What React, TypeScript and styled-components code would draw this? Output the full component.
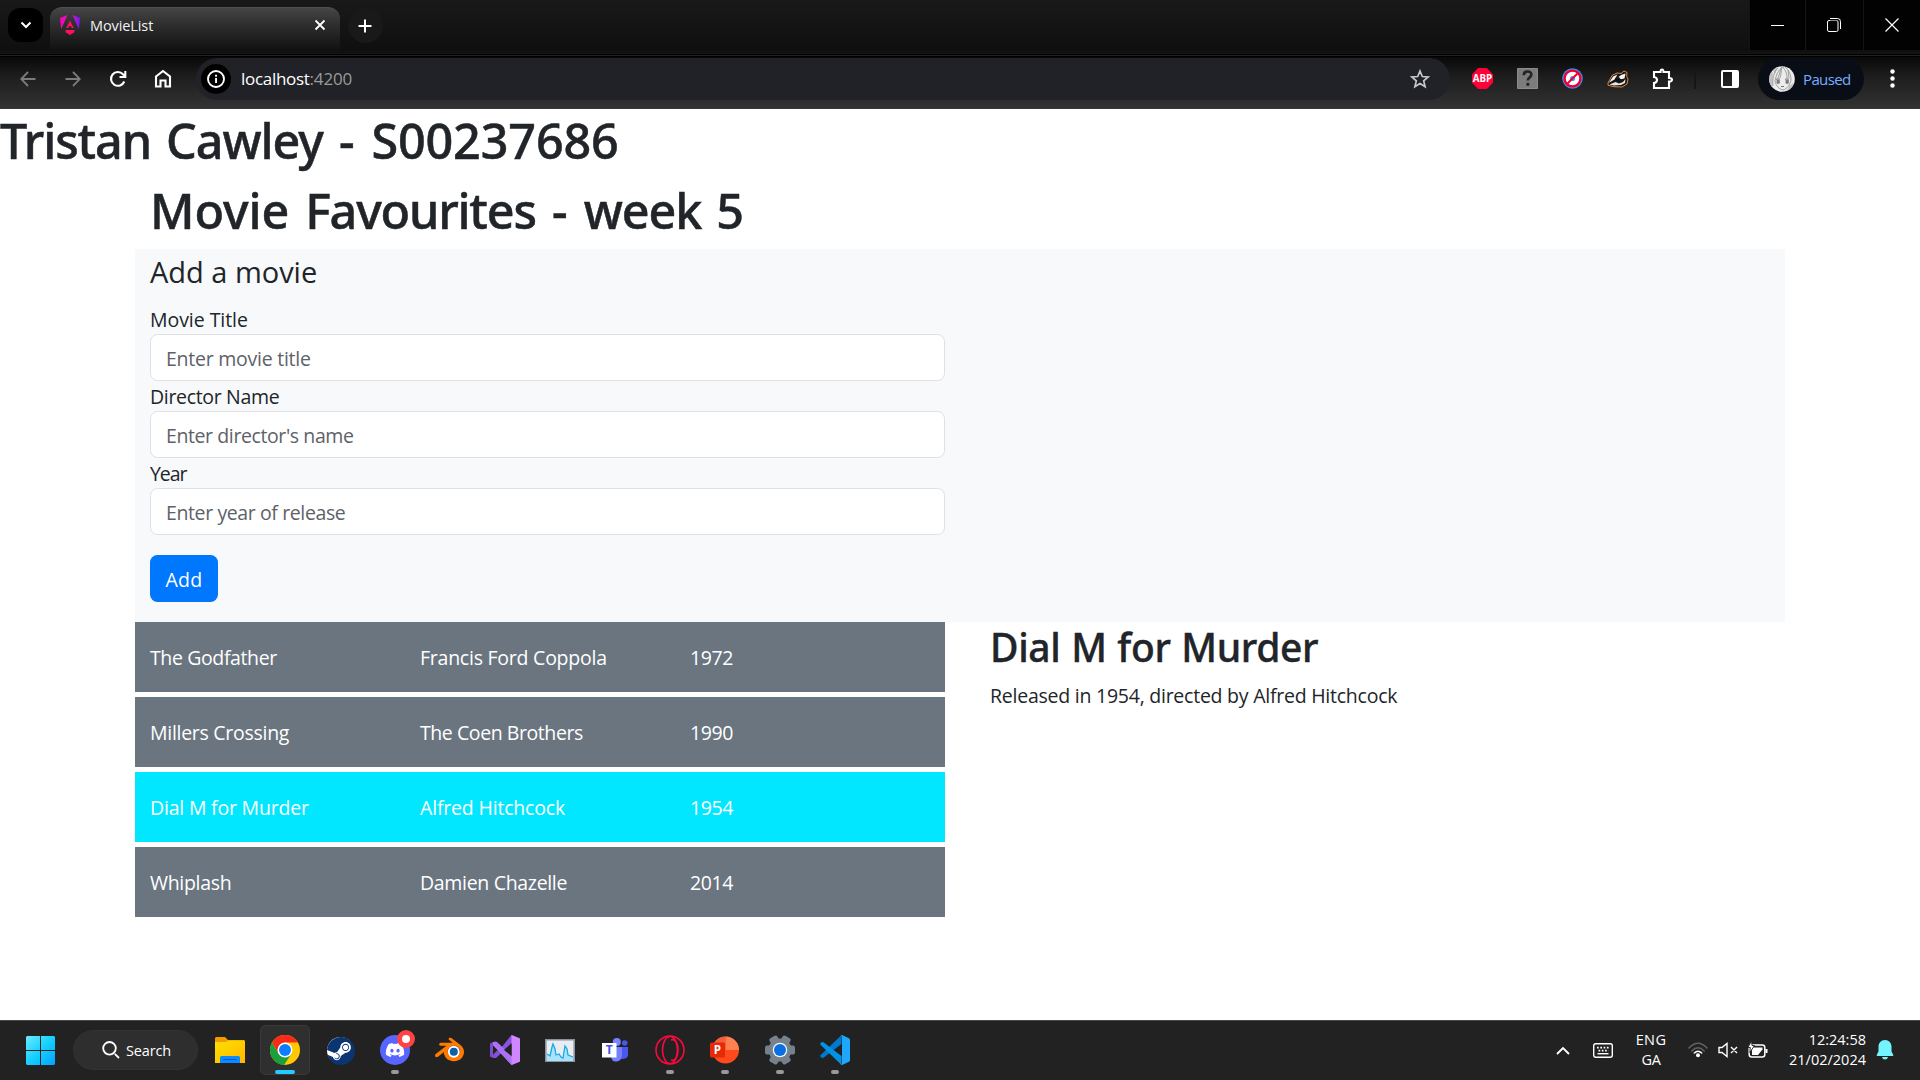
import React from 'react';
import styled, { createGlobalStyle } from 'styled-components';
import { FaDiscord } from 'react-icons/fa';
import { SiSteam, SiBlender } from 'react-icons/si';

const GlobalStyle = createGlobalStyle`
  * { box-sizing: border-box; }
  html, body { margin: 0; padding: 0; background: #fff; }
  body { font-family: "Open Sans", "Noto Sans", sans-serif; overflow: hidden; }
  svg { display: block; flex: none; }
`;

/* ---------- shared ---------- */

const Screen = styled.div`
  display: flex;
  flex-direction: column;
  width: 1920px;
  height: 1080px;
`;

const Txt = styled.span<{ $ls?: number }>`
  letter-spacing: ${p => p.$ls ?? 0}px;
  white-space: pre;
`;

/* ---------- tab strip ---------- */

const TabStrip = styled.div`
  display: flex;
  height: 57px;
  padding-left: 8px;
  background:
    linear-gradient(#000, #000) 0 54px / 100% 1px no-repeat,
    linear-gradient(#222, #222) 0 55px / 100% 1px no-repeat,
    linear-gradient(#000, #000) 0 56px / 100% 1px no-repeat,
    linear-gradient(#191919, #0f0f0f 50px, #141414 54px);
`;

const TabSearch = styled.div`
  display: grid;
  place-items: center;
  width: 35px;
  height: 34px;
  margin-top: 8px;
  border-radius: 12px;
  background: #000;
`;

const Tab = styled.div`
  display: flex;
  align-items: center;
  width: 290px;
  height: 45px;
  margin: 7px 0 0 7px;
  padding: 0 14px 10px 10px;
  border-radius: 12px 12px 0 0;
  background: linear-gradient(#454545, #303030 35%, #111 95%);
  border-top: 1px solid #505050;
  color: #f1f1f1;
  font-size: 14.5px;
`;

const TabTitle = styled.div`
  flex: 1;
  margin-left: 10px;
`;

const NewTab = styled.div`
  display: grid;
  place-items: center;
  width: 35px;
  height: 35px;
  margin: 8px auto 0 8px;
  padding-right: 1px;
  border-radius: 50%;
  background: #191919;
`;

const WindowButton = styled.div<{ $w: number }>`
  display: grid;
  place-items: center;
  width: ${p => p.$w}px;
  height: 50px;
  padding-right: 1px;
  background: #020202;
  border-left: 1px solid #141414;
`;

/* ---------- toolbar ---------- */

const Toolbar = styled.div`
  display: flex;
  align-items: center;
  height: 52px;
  padding: 0 5px 8px 5px;
  background: linear-gradient(#090909, #1e1e1e 40%, #2f2f2f 90%, #333);
  border-bottom: 1px solid #3b3838;
`;

const ToolCell = styled.div<{ $w?: number }>`
  display: grid;
  place-items: center;
  width: ${p => p.$w ?? 45}px;
  height: 44px;
`;

const AddressBar = styled.div`
  display: flex;
  align-items: center;
  width: 1254px;
  height: 42px;
  margin: 0 10px 0 11px;
  padding: 0 20px 0 5px;
  border-radius: 21px;
  background: #212227;
  font-size: 17px;
  color: #fff;
`;

const SiteInfo = styled.div`
  display: grid;
  place-items: center;
  width: 30px;
  height: 30px;
  border-radius: 50%;
  background: #000;
  margin-right: 10px;
`;

const Port = styled(Txt)`
  color: #9a9a9a;
  margin-right: auto;
`;

const ToolDivider = styled.div`
  width: 2px;
  height: 20px;
  margin: 0 12px 0 9px;
  background: #161616;
`;

const Profile = styled.div`
  display: flex;
  align-items: center;
  width: 106px;
  height: 42px;
  margin: 0 6px 0 6px;
  padding-left: 11px;
  gap: 8px;
  border-radius: 21px;
  background: #090d16;
  color: #78adff;
  font-size: 15px;
`;

/* ---------- page ---------- */

const Page = styled.main`
  height: 911px;
  background: #fff;
  color: #212529;
  font-size: 19.5px;
`;

const Title = styled.h1`
  margin: 0 0 10px;
  height: 60px;
  padding-top: 2px;
  font: 500 48.5px/58px "Noto Sans", "Open Sans", sans-serif;
  word-spacing: 3.5px;
  -webkit-text-stroke: 0.5px #212529;
`;

const Container = styled.div`
  width: 1650px;
  margin: 0 auto;
`;

const Inset = styled.div`
  padding-left: 15px;
`;

const FormPanel = styled.form`
  display: flex;
  flex-direction: column;
  align-items: flex-start;
  height: 373px;
  padding: 0 840px 20px 15px;
  background: #f7f9fb;
`;

const Legend = styled.div`
  height: 45px;
  margin-bottom: 10px;
  padding-top: 1px;
  font-size: 29px;
  line-height: 44px;
`;

const Label = styled.label`
  height: 30px;
  padding-top: 1px;
  line-height: 29px;
`;

const Input = styled.input<{ $ls: number }>`
  width: 795px;
  height: 47px;
  padding: 2px 15px 0;
  border: 1px solid #dde1e6;
  border-radius: 7.5px;
  background: #fff;
  font: 19.5px "Open Sans", sans-serif;
  letter-spacing: ${p => p.$ls}px;
  outline: none;
  &::placeholder { color: #5d6268; opacity: 1; }
`;

const AddButton = styled.button`
  width: 68px;
  height: 47px;
  margin-top: 20px;
  padding: 1px 0 0;
  border: 0;
  border-radius: 7.5px;
  background: #0077ff;
  color: #fff;
  font: 19.5px "Open Sans", sans-serif;
`;

const Results = styled.div`
  display: grid;
  grid-template-columns: 810px 1fr;
  column-gap: 45px;
`;

const MovieList = styled.div`
  display: flex;
  flex-direction: column;
  gap: 5px;
`;

const MovieRow = styled.div<{ $selected: boolean }>`
  display: grid;
  grid-template-columns: repeat(3, 270px);
  align-items: center;
  height: 70px;
  padding: 0 0 0 15px;
  background: ${p => (p.$selected ? '#00e7ff' : '#6a7580')};
  color: #fff;
  overflow: hidden;
`;

const DetailTitle = styled.h2`
  height: 48px;
  margin: 0 0 10px;
  padding-top: 1px;
  font: 500 39px/47px "Noto Sans", "Open Sans", sans-serif;
  word-spacing: 1px;
  -webkit-text-stroke: 0.4px #212529;
`;

const DetailText = styled.p`
  margin: 0;
  padding-top: 1px;
  line-height: 29px;
`;

/* ---------- taskbar ---------- */

const Taskbar = styled.footer`
  display: flex;
  align-items: center;
  height: 60px;
  padding-left: 26px;
  padding-bottom: 1px;
  background: #222;
  border-top: 1px solid #444746;
  color: #fff;
  font-size: 14.5px;
`;

const SearchBox = styled.div`
  display: flex;
  align-items: center;
  gap: 6px;
  width: 125px;
  height: 40px;
  margin: 0 7px 0 18px;
  padding-left: 28px;
  border-radius: 20px;
  background: #2e2e2e;
  border: 1px solid #323232;
`;

const Apps = styled.div`
  display: flex;
  gap: 5px;
`;

const AppTile = styled.div<{ $active?: boolean }>`
  position: relative;
  display: grid;
  place-items: center;
  width: 50px;
  height: 50px;
  border-radius: 5px;
  background: ${p => (p.$active ? '#2f2f2f' : 'transparent')};
  border: 1px solid ${p => (p.$active ? '#393939' : 'transparent')};
`;

const Indicator = styled.div<{ $active?: boolean }>`
  position: absolute;
  bottom: 0;
  left: 50%;
  transform: translateX(-50%);
  width: ${p => (p.$active ? 20 : 8)}px;
  height: 4px;
  border-radius: 2px;
  background: ${p => (p.$active ? '#22ccff' : '#999')};
`;

const Disc = styled.div<{ $bg: string; $size: number; $color: string }>`
  display: grid;
  place-items: center;
  width: ${p => p.$size}px;
  height: ${p => p.$size}px;
  border-radius: 50%;
  background: ${p => p.$bg};
  color: ${p => p.$color};
`;

const Badge = styled.div`
  position: absolute;
  left: 26px;
  top: 4px;
  width: 18px;
  height: 18px;
  border-radius: 50%;
  border: 5px solid #ff4343;
  background: #fff;
`;

const Tray = styled.div`
  display: flex;
  align-items: center;
  margin-left: auto;
  padding-right: 16px;
`;

const TrayLines = styled.div<{ $w: number; $align: string }>`
  display: flex;
  flex-direction: column;
  align-items: ${p => p.$align};
  width: ${p => p.$w}px;
  line-height: 20px;
`;

const TrayCell = styled.div<{ $w: number }>`
  display: grid;
  place-items: center;
  width: ${p => p.$w}px;
  height: 40px;
`;

/* ---------- icons ---------- */

type StrokeProps = { w: number; h?: number; d: string; sw?: number; c?: string };
const Stroke = ({ w, h = w, d, sw = 2, c = '#fff' }: StrokeProps) => (
  <svg width={w} height={h} viewBox={`0 0 ${w} ${h}`} fill="none" stroke={c} strokeWidth={sw}>
    <path d={d} />
  </svg>
);

const AngularIcon = () => (
  <svg width="20" height="20" viewBox="0 0 20 20">
    <defs>
      <linearGradient id="ng" gradientUnits="userSpaceOnUse" x1="0" x2="20" y1="8" y2="10">
        <stop offset="0" stopColor="#f0b" /><stop offset=".5" stopColor="#e014c0" /><stop offset="1" stopColor="#7018ff" />
      </linearGradient>
    </defs>
    <path d="M7.500 0 0 3l1.200 11zM12.500 0 20 3l-1.200 11z" fill="url(#ng)" />
    <path d="M10 5.500 6.200 13h2l.7-1.800h2.200l.7 1.800h2zM5.600 15h8.800v2.200L10 20l-4.400-2.800z" fill="#ff0f5c" />
  </svg>
);

const AbpIcon = () => (
  <svg width="21" height="21" viewBox="0 0 21 21">
    <path d="M6.200 0h8.600L21 6.200v8.600L14.800 21H6.200L0 14.800V6.200z" fill="#ff0037" />
    <text x="10.500" y="14.200" textAnchor="middle" fontFamily="Open Sans" fontWeight="700" fontSize="9.800" fill="#fff">ABP</text>
  </svg>
);

const QuestionIcon = () => (
  <svg width="21" height="21" viewBox="0 0 21 21">
    <path d="M.5.5h20v20H.5z" fill="#7c7c7c" stroke="#8b8b8b" />
    <path d="M6.800 7.200c0-5 7.600-4.800 7.600-.6 0 3-3.600 2.600-3.600 6" fill="none" stroke="#242424" strokeWidth="2.600" />
    <path d="M9.400 14.800h2.900v3H9.400z" fill="#242424" />
  </svg>
);

const BlockIcon = () => (
  <svg width="21" height="21" viewBox="0 0 21 21">
    <circle cx="10.500" cy="10.500" r="10.300" fill="#3d8cf0" />
    <circle cx="10.500" cy="10.500" r="7.900" fill="#fff" stroke="#f0002c" strokeWidth="2.300" />
    <circle cx="10.500" cy="10.500" r="2.600" fill="#4d9bf5" />
    <path d="m5.500 15.500 10-10" stroke="#f0002c" strokeWidth="2" />
  </svg>
);

const BadgerIcon = () => (
  <svg width="22" height="18" viewBox="0 0 22 18">
    <path d="M1 13 5 5.500 10 3l4 .5L17 1l3 1.500-.3 4L21 9l-1 5-5 3-8-.3-6-1.500z" fill="#161616" stroke="#e08a3c" strokeWidth="1" strokeLinejoin="round" />
    <path d="M2 12.800 6 6.500l4.500-2-3 5zM9 9l5-4 4.500-1.500-1 5-5 1z" fill="#f3f3f3" />
    <path d="m2.500 14.500 6-2.500 3.500 1.500 4-1.500 2.500-3-.5 4-4 2-7 .6z" fill="#e4e4e4" />
    <path d="m8 9 4-1.500 1.500 2.500-3 1.500zM13 12l4-2" fill="#111" stroke="#111" />
  </svg>
);

const AvatarIcon = () => (
  <svg width="26" height="26" viewBox="0 0 26 26">
    <defs><clipPath id="av"><circle cx="13" cy="13" r="12.800" /></clipPath></defs>
    <g clipPath="url(#av)" fill="none" stroke="#8c8c8c" strokeWidth=".8">
      <path d="M0 0h26v26H0z" fill="#ececec" stroke="none" />
      <path d="M0 6h4l-1 17-3 1zM20 20l6-4v9h-8zM3 3l6-3-3 8z" fill="#c2c2c2" stroke="none" />
      <path d="M13 1C9 5 7 9 6 15M13 1c-1 5-1 8-2 11M14 1c3 4 4 7 4 11M16 1c4 3 6 8 6 13M9 2C5 6 3 12 4 20M12 3 9 12M19 4l1 8M6 15c1 5 4 8 8 9 4-1 7-5 8-10" />
      <path d="M7 13.500c1.500-1 3-1 4 0M16 13.500c1.500-1 3-1 4 0M12 20.500h3" stroke="#555" />
      <path d="M8 14.200h2.300v3H8zM17 14.200h2.300v3H17z" fill="#8a8a8a" stroke="#666" />
    </g>
  </svg>
);

const WindowsIcon = () => (
  <svg width="29" height="29" viewBox="0 0 29 29">
    <defs>
      <linearGradient id="win" gradientUnits="userSpaceOnUse" x1="0" y1="0" x2="29" y2="29">
        <stop stopColor="#6aeaff" /><stop offset=".5" stopColor="#16d0ff" /><stop offset="1" stopColor="#00a2ff" />
      </linearGradient>
    </defs>
    <path d="M1 0h13v14H0V1zM15 0h13l1 1v13H15zM0 15h14v14H1l-1-1zM15 15h14v13l-1 1H15z" fill="url(#win)" />
  </svg>
);

const FolderIcon = () => (
  <svg width="30" height="27" viewBox="0 0 30 27">
    <defs><linearGradient id="fo" x2="1" y2="1"><stop stopColor="#ffe000" /><stop offset="1" stopColor="#ffb600" /></linearGradient></defs>
    <path d="M1 0h9l3 3h16v4H0V1z" fill="#f29a00" />
    <path d="M0 5h11l2-1.500h17V26H0z" fill="url(#fo)" />
    <path d="M5 26v-5.500Q5 19 6.500 19h17q1.500 0 1.500 1.500V26z" fill="#0a8bff" />
    <path d="M8.500 22.500h13" stroke="#0058c8" />
  </svg>
);

const ChromeIcon = () => (
  <svg width="30" height="30" viewBox="0 0 30 30">
    <circle cx="15" cy="15" r="15" fill="#ffc800" />
    <path d="M15 7.500h13A15 15 0 0 0 2 7.500l6.500 11.300z" fill="#fa2a18" />
    <path d="M2 7.500A15 15 0 0 0 14 30l7.500-11.200h-13z" fill="#18a03c" />
    <circle cx="15" cy="15" r="7.500" fill="#fff" />
    <circle cx="15" cy="15" r="6" fill="#0c7dff" />
  </svg>
);

const BlenderIcon = () => (
  <svg width="30" height="30" viewBox="0 0 30 30">
    <g color="#ff7b00"><SiBlender x="0" y="0" size={29} /></g>
    <circle cx="18.800" cy="16.800" r="6" fill="#fff" />
    <circle cx="18.800" cy="16.800" r="4" fill="#0f5fa8" />
  </svg>
);

const VisualStudioIcon = () => (
  <svg width="30" height="30" viewBox="0 0 30 30">
    <path d="M0 8.500 3 7l5 4v8l-5 4-3-1.500z" fill="#7c4ccb" />
    <path d="M3 23 21.500 0 30 3.500 21 8.500 6 23z" fill="#8a52dd" />
    <path d="M3 7h4l14.500 14.500V30L3 10z" fill="#b078f8" />
    <path d="m3 7 3-.5L21.500 21 30 26.500 21.500 30z" fill="#a970f5" />
    <path d="M21.500 0 30 3.500v23L21.500 30z" fill="#d086ff" />
    <path d="M3 10.500 7.500 15 3 19.500z" fill="#222" />
    <path d="M21.500 9v12L14 15z" fill="#222" />
  </svg>
);

const MonitorIcon = () => (
  <svg width="30" height="23" viewBox="0 0 30 23">
    <path d="M.8.8h28.400v21.400H.8z" fill="#e9edf2" stroke="#8a949e" strokeWidth="1.600" />
    <path d="M2 15l3 3 2-10 1-3 2 5 1 6 3-1 2 3 2 1 2-11 2 2 1 6 5 2v4H2z" fill="#a9e3fb" />
    <path d="m2 15 3 2 2-9 1-3 2 5 1 6 3-1 2 3 2 1 2-12 2 3 1 6 5 2" fill="none" stroke="#18a8e6" strokeWidth="1.300" />
  </svg>
);

const TeamsIcon = () => (
  <svg width="27" height="24" viewBox="0 0 27 24">
    <circle cx="22.700" cy="5" r="2.800" fill="#4a57e6" />
    <circle cx="14.800" cy="4" r="4" fill="#7b83ff" />
    <path d="M18 9h8v7.500q0 4-5 4.500h-3z" fill="#4a57f0" />
    <path d="M9 9h11v8q-.5 6-5.500 6.500T9 18z" fill="#7580ff" />
    <path d="M0 5h14.500v14.500H0z" fill="#fff" />
    <text x="7.300" y="16.300" textAnchor="middle" fontFamily="Open Sans" fontWeight="700" fontSize="12" fill="#4450e8">T</text>
  </svg>
);

const OperaIcon = () => (
  <svg width="30" height="30" viewBox="0 0 30 30" fill="none" stroke="#fa0a3c" strokeWidth="1.600">
    <circle cx="15" cy="15" r="14" />
    <ellipse cx="15" cy="15" rx="7.500" ry="13.500" />
    <path d="M16 5c5-2 7 5 7 10s-2 12-7 10" />
  </svg>
);

const PowerPointIcon = () => (
  <svg width="30" height="28" viewBox="0 0 30 28">
    <circle cx="15.500" cy="14" r="13.500" fill="#ff4a1c" />
    <path d="M15.500.5A13.500 13.500 0 0 1 29 14H15.500z" fill="#ff8050" />
    <path d="M2 14h13.500V.5A13.500 13.500 0 0 0 2 14z" fill="#f0603c" />
    <rect y="6.500" width="15" height="15" rx="1.500" fill="#e52a08" />
    <text x="7.300" y="18" textAnchor="middle" fontFamily="Open Sans" fontWeight="700" fontSize="11.500" fill="#fff">P</text>
  </svg>
);

const GearIcon = () => (
  <svg width="30" height="30" viewBox="0 0 30 30">
    <g fill="#75818c">
      {[0, 60, 120].map(a => (
        <rect key={a} x="0" y="10.500" width="30" height="9" rx="2" transform={`rotate(${a} 15 15)`} />
      ))}
      <circle cx="15" cy="15" r="11.500" />
    </g>
    <circle cx="15" cy="15" r="7.300" fill="#f2f6fa" />
    <circle cx="15" cy="15" r="6" fill="#0a6fe0" />
  </svg>
);

const VsCodeIcon = () => (
  <svg width="30" height="30" viewBox="0 0 30 30">
    <path d="M.5 20.200 21.500 0v9L3.500 22.800q-1 .6-1.800 0l-1-.8q-.8-1-.2-1.800z" fill="#0078d0" />
    <path d="M.5 9.800 21.500 30v-9L3.500 7.200q-1-.6-1.800 0l-1 .8q-.8 1-.2 1.800z" fill="#0092e4" />
    <path d="m20.500.8 1.500-.8L29 3.300q1 .6 1 1.700v20q0 1.100-1 1.700L22 30l-1.500-.8q1.500.3 1.500-1.700v-25q0-2-1.500-1.700z" fill="#1fa8fb" />
  </svg>
);

const WifiIcon = () => (
  <svg width="20" height="16" viewBox="0 0 20 16" fill="none" strokeWidth="1.500" strokeLinecap="round">
    <path d="M1 6q9-9.500 18 0M3.800 9q6.200-6.500 12.400 0" stroke="#626262" />
    <path d="M6.300 11q3.700-3.600 7.400 0" stroke="#fff" />
    <circle cx="10" cy="13.300" r="2" fill="#fff" />
  </svg>
);

const BatteryIcon = () => (
  <svg width="22" height="18" viewBox="0 0 22 18">
    <rect x="1.200" y="4" width="15.600" height="12" rx="2.500" fill="none" stroke="#fff" strokeWidth="1.500" />
    <path d="M17.500 8h2v4h-2z" fill="#fff" />
    <path d="M4 6.500h10.500v2L10 14H4z" fill="#fff" />
    <path d="M3.500 0 0 6.500h2.300L1.800 11.500 6.500 4.500H4z" fill="#fff" stroke="#222" strokeWidth=".9" />
  </svg>
);

const KeyboardIcon = () => (
  <svg width="20" height="15" viewBox="0 0 20 15" stroke="#fff" fill="none">
    <rect x=".7" y=".7" width="18.600" height="13.600" rx="2" strokeWidth="1.400" />
    <path d="M4 4.700h12M5.500 7.600h10" strokeWidth="1.700" strokeDasharray="1.700 1.600" />
    <path d="M4.500 10.700h11" strokeWidth="1.400" />
  </svg>
);

const BellIcon = () => (
  <svg width="18" height="20" viewBox="0 0 18 20" fill="#74f4ff">
    <path d="M9 0c4 0 6.500 3 6.500 6.500v5L17.300 15q.3 1-.7 1H1.400q-1 0-.7-1l1.800-3.500v-5C2.500 3 5 0 9 0zM6 17h6q-.6 2.500-3 2.500T6 17z" />
  </svg>
);

/* ---------- data ---------- */

type Cell = { text: string; ls: number };
const movies: { cells: Cell[]; selected: boolean }[] = [
  { selected: false, cells: [{ text: 'The Godfather', ls: -0.38 }, { text: 'Francis Ford Coppola', ls: -0.24 }, { text: '1972', ls: -0.4 }] },
  { selected: false, cells: [{ text: 'Millers Crossing', ls: -0.28 }, { text: 'The Coen Brothers', ls: -0.43 }, { text: '1990', ls: -0.4 }] },
  { selected: true, cells: [{ text: 'Dial M for Murder', ls: -0.2 }, { text: 'Alfred Hitchcock', ls: -0.18 }, { text: '1954', ls: -0.4 }] },
  { selected: false, cells: [{ text: 'Whiplash', ls: -0.32 }, { text: 'Damien Chazelle', ls: -0.32 }, { text: '2014', ls: -0.4 }] },
];

const fields = [
  { label: 'Movie Title', ls: -0.05, hint: 'Enter movie title', hintLs: -0.25 },
  { label: 'Director Name', ls: -0.33, hint: "Enter director's name", hintLs: -0.4 },
  { label: 'Year', ls: -1.1, hint: 'Enter year of release', hintLs: -0.39 },
];

const apps: { icon: React.ReactNode; active?: boolean; running?: boolean; badge?: boolean }[] = [
  { icon: <FolderIcon /> },
  { icon: <ChromeIcon />, active: true, running: true },
  { icon: <Disc $bg="#fff" $size={27} $color="#0a3570"><SiSteam size={28} /></Disc> },
  { icon: <Disc $bg="#5865ff" $size={30} $color="#fff"><FaDiscord size={20} /></Disc>, running: true, badge: true },
  { icon: <BlenderIcon /> },
  { icon: <VisualStudioIcon /> },
  { icon: <MonitorIcon /> },
  { icon: <TeamsIcon /> },
  { icon: <OperaIcon />, running: true },
  { icon: <PowerPointIcon />, running: true },
  { icon: <GearIcon />, running: true },
  { icon: <VsCodeIcon />, running: true },
];

export default function App() {
  return (
    <Screen>
      <GlobalStyle />
      <TabStrip>
        <TabSearch><Stroke w={12} h={8} d="m1.500 1.500 4.500 4.500 4.500-4.500" /></TabSearch>
        <Tab>
          <AngularIcon />
          <TabTitle><Txt $ls={-0.1}>MovieList</Txt></TabTitle>
          <Stroke w={12} d="m1.500 1.500 9 9m0-9-9 9" sw={1.8} />
        </Tab>
        <NewTab><Stroke w={14} d="M7 .5v13M.5 7h13" /></NewTab>
        <WindowButton $w={56}><Stroke w={13} h={1} d="M0 .5h13" /></WindowButton>
        <WindowButton $w={58}>
          <svg width="14" height="14" viewBox="0 0 14 14" fill="none" stroke="#fff">
            <rect x=".5" y="2.500" width="10.500" height="11" rx="1.500" />
            <path d="M3 .5h7.500q3 0 3 3V11" />
            <path d="M3 2.500h6q2 0 2 2v7" stroke="#888" />
          </svg>
        </WindowButton>
        <WindowButton $w={57}><Stroke w={14} d="m.5.5 13 13m0-13-13 13" sw={1.2} /></WindowButton>
      </TabStrip>

      <Toolbar>
        <ToolCell><Stroke w={16} d="M15.500 8H1.500M8 1 1.200 8 8 15" c="#7b7b7b" sw={1.8} /></ToolCell>
        <ToolCell><Stroke w={16} d="M.5 8h14M8 1l6.800 7L8 15" c="#7b7b7b" sw={1.8} /></ToolCell>
        <ToolCell><Stroke w={18} d="M15.300 11.500A6.900 6.900 0 1 1 14 4.200l2 2M16.300 1v6H10.500" sw={2.1} /></ToolCell>
        <ToolCell><Stroke w={18} h={19} d="M2 7.500 9 2l7 5.500V17.500h-4.500v-6h-5v6H2z" sw={2.1} /></ToolCell>
        <AddressBar>
          <SiteInfo>
            <svg width="18" height="18" viewBox="0 0 18 18">
              <circle cx="9" cy="9" r="8" fill="none" stroke="#fff" strokeWidth="1.900" />
              <path d="M8.100 8h1.900v5H8.100zM8.100 4.800h1.900v1.900H8.100z" fill="#fff" />
            </svg>
          </SiteInfo>
          <Txt $ls={-0.3}>localhost</Txt><Port $ls={-0.15}>:4200</Port>
          <Stroke w={20} d="m10 2 2.300 5.500 5.900.5-4.500 3.900 1.400 5.800L10 14.600l-5.100 3.100 1.400-5.800L1.800 8l5.900-.5z" c="#c8c8c8" sw={1.7} />
        </AddressBar>
        <ToolCell><AbpIcon /></ToolCell>
        <ToolCell><QuestionIcon /></ToolCell>
        <ToolCell><BlockIcon /></ToolCell>
        <ToolCell><BadgerIcon /></ToolCell>
        <ToolCell>
          <Stroke w={22} h={22} d="M2 4h6.500Q8.500 1.500 10 1.500T11.500 4H17v6q3 0 3 1.800T17 13.500V20H2v-5q3-.3 3-3T2 9z" sw={2.1} />
        </ToolCell>
        <ToolDivider />
        <ToolCell $w={44}>
          <svg width="18" height="18" viewBox="0 0 18 18">
            <rect x="1" y="1" width="16" height="16" rx="1" fill="none" stroke="#fff" strokeWidth="2" />
            <path d="M11 1h6v16h-6z" fill="#fff" />
          </svg>
        </ToolCell>
        <Profile><AvatarIcon /><Txt $ls={-0.62}>Paused</Txt></Profile>
        <ToolCell>
          <svg width="5" height="19" viewBox="0 0 5 19" fill="#fff">
            <circle cx="2.500" cy="2.500" r="2.200" /><circle cx="2.500" cy="9.500" r="2.200" /><circle cx="2.500" cy="16.500" r="2.200" />
          </svg>
        </ToolCell>
      </Toolbar>

      <Page>
        <Title><Txt $ls={-1.1}>Tristan Cawley</Txt><Txt $ls={0.3}>{' - '}</Txt><Txt $ls={-0.15}>S00237686</Txt></Title>
        <Container>
          <Inset>
            <Title>
              <Txt $ls={-0.1}>Movie </Txt><Txt $ls={-1.2}>Favourites</Txt><Txt $ls={0.1}>{' - '}</Txt><Txt $ls={-1.15}>week 5</Txt>
            </Title>
          </Inset>
          <FormPanel>
            <Legend><Txt $ls={-0.02}>Add a movie</Txt></Legend>
            {fields.map(f => (
              <React.Fragment key={f.label}>
                <Label><Txt $ls={f.ls}>{f.label}</Txt></Label>
                <Input placeholder={f.hint} $ls={f.hintLs} />
              </React.Fragment>
            ))}
            <AddButton type="button"><Txt $ls={0.2}>Add</Txt></AddButton>
          </FormPanel>
          <Results>
            <MovieList>
              {movies.map(m => (
                <MovieRow key={m.cells[0].text} $selected={m.selected}>
                  {m.cells.map(c => <Txt key={c.text} $ls={c.ls}>{c.text}</Txt>)}
                </MovieRow>
              ))}
            </MovieList>
            <div>
              <DetailTitle><Txt $ls={-0.37}>Dial M for Murder</Txt></DetailTitle>
              <DetailText><Txt $ls={-0.24}>Released in 1954, directed by Alfred Hitchcock</Txt></DetailText>
            </div>
          </Results>
        </Container>
      </Page>

      <Taskbar>
        <WindowsIcon />
        <SearchBox>
          <Stroke w={18} d="M12.800 12.800 17 17M7.500 1a6.300 6.300 0 1 0 0 12.600A6.300 6.300 0 0 0 7.500 1z" sw={1.8} />
          <Txt $ls={-0.15}>Search</Txt>
        </SearchBox>
        <Apps>
          {apps.map((a, i) => (
            <AppTile key={i} $active={a.active}>
              {a.icon}
              {a.badge && <Badge />}
              {a.running && <Indicator $active={a.active} />}
            </AppTile>
          ))}
        </Apps>
        <Tray>
          <TrayCell $w={40}><Stroke w={14} h={9} d="m1 8 6-6 6 6" sw={1.9} /></TrayCell>
          <TrayCell $w={40}><KeyboardIcon /></TrayCell>
          <TrayLines $w={56} $align="center"><Txt $ls={0.4}>ENG</Txt><Txt $ls={-0.4}>GA</Txt></TrayLines>
          <TrayCell $w={38}><WifiIcon /></TrayCell>
          <TrayCell $w={22}>
            <Stroke w={20} h={16} d="M1 5.500h3L9 1.500v13l-5-4H1zM13 5l6 6m0-6-6 6" sw={1.4} />
          </TrayCell>
          <TrayCell $w={40}><BatteryIcon /></TrayCell>
          <TrayLines $w={87} $align="flex-end"><Txt>12:24:58</Txt><Txt>21/02/2024</Txt></TrayLines>
          <TrayCell $w={38}><BellIcon /></TrayCell>
        </Tray>
      </Taskbar>
    </Screen>
  );
}
